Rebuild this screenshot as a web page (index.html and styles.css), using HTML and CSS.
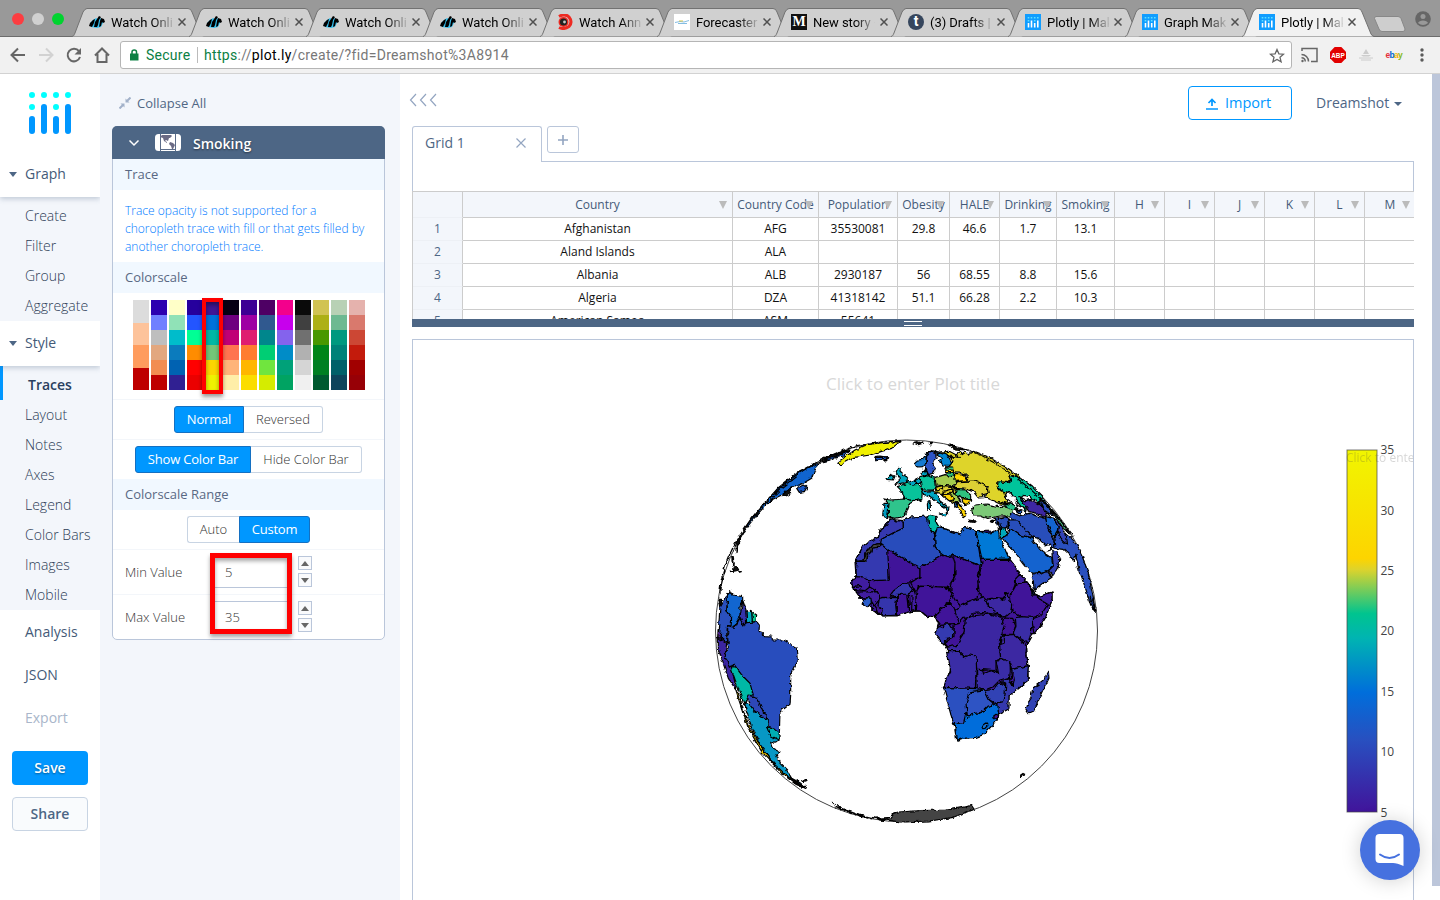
FILE: index.html
```html
<!DOCTYPE html>
<html lang="en">
<head>
<meta charset="utf-8">
<title>Plotly | Make charts</title>
<link rel="stylesheet" href="styles.css">
</head>
<body>
<svg class="defs" width="0" height="0">
  <symbol id="tab" viewBox="0 0 132 29"><path d="M0 28.500C2 28 2 27 3 25L11 4Q13 .5 15 .5H116Q119 .5 120 4L129 26Q130 28 132 28.500"/></symbol>
  <symbol id="fish" viewBox="0 0 16 16"><path fill="#37c0ee" d="M1 9l3-3 3-2 2 1 2-1 4 3-1 2-2 4-4 1-6-1z"/><path fill="#000" d="M0 12l1-3 3-3 2-1-1 4-2 4zM5 13l1-5 2-3 2-3 2 1-2 3-1 5-1 2zM10 13l1-6 1-3 3 1 1 3-2 1-1-1-1 4z"/></symbol>
  <symbol id="plotly" viewBox="0 0 16 16"><path fill="#119dff" d="M0 0h16v16H0z"/><path stroke="#fff" stroke-width="1.600" d="M3.500 9v4.500M6.500 6.500v7M9.700 9v4.500M12.800 6.500v7"/><path stroke="#5fe0ff" stroke-width="1.600" d="M3.500 3v1.500M6.500 3v1.500M9.700 3v1.500M12.800 3v1.500M3.500 6v1.500M9.700 6v1.500"/></symbol>
  <symbol id="x" viewBox="0 0 8 8"><path d="M.5.5l7 7M7.500.5l-7 7"/></symbol>
</svg>

<header class="tabs">
  <div class="lights"><i class="red"></i><i class="grey"></i><i class="green"></i></div>
  <div class="tab"><svg class="shape"><use href="#tab"/></svg><svg class="fav"><use href="#fish"/></svg><span>Watch Online</span><svg class="x"><use href="#x"/></svg></div>
  <div class="tab"><svg class="shape"><use href="#tab"/></svg><svg class="fav"><use href="#fish"/></svg><span>Watch Online</span><svg class="x"><use href="#x"/></svg></div>
  <div class="tab"><svg class="shape"><use href="#tab"/></svg><svg class="fav"><use href="#fish"/></svg><span>Watch Online</span><svg class="x"><use href="#x"/></svg></div>
  <div class="tab"><svg class="shape"><use href="#tab"/></svg><svg class="fav"><use href="#fish"/></svg><span>Watch Online</span><svg class="x"><use href="#x"/></svg></div>
  <div class="tab"><svg class="shape"><use href="#tab"/></svg><svg class="fav" viewBox="0 0 16 16"><path d="M2 2.500Q8-1 12 3Q16 8 12 12.500Q7 16 2 13.500" fill="none" stroke="#ee2a22" stroke-width="3"/><circle cx="6.500" cy="8" r="5" fill="#ee2a22"/><circle cx="6.500" cy="8" r="3.600" fill="#222"/><circle cx="7.500" cy="8" r="1.400" fill="#c8c8c8"/></svg><span>Watch Anna</span><svg class="x"><use href="#x"/></svg></div>
  <div class="tab"><svg class="shape"><use href="#tab"/></svg><svg class="fav" viewBox="0 0 16 16"><path fill="#fff" d="M0 0h16v16H0z"/><path d="M1 8.500L6 7.500 10 8 15 6.500M4 9.500h9" stroke="#84bde2" fill="none"/><path d="M5 7l4 0" stroke="#d7c64b"/></svg><span>Forecaster</span><svg class="x"><use href="#x"/></svg></div>
  <div class="tab"><svg class="shape"><use href="#tab"/></svg><b class="fav medium">M</b><span>New story – M</span><svg class="x"><use href="#x"/></svg></div>
  <div class="tab"><svg class="shape"><use href="#tab"/></svg><b class="fav tumblr">t</b><span>(3) Drafts | T</span><svg class="x"><use href="#x"/></svg></div>
  <div class="tab"><svg class="shape"><use href="#tab"/></svg><svg class="fav"><use href="#plotly"/></svg><span>Plotly | Make</span><svg class="x"><use href="#x"/></svg></div>
  <div class="tab"><svg class="shape"><use href="#tab"/></svg><svg class="fav"><use href="#plotly"/></svg><span>Graph Maker</span><svg class="x"><use href="#x"/></svg></div>
  <div class="tab active"><svg class="shape"><use href="#tab"/></svg><svg class="fav"><use href="#plotly"/></svg><span>Plotly | Make</span><svg class="x"><use href="#x"/></svg></div>
  <svg class="newtab" width="34" height="18" viewBox="0 0 34 18"><path d="M3 1.500H25Q27 1.500 28 3.500L32 14Q32 16.500 30 16.500H9Q7 16.500 6 14L1.500 3.500Q1.500 1.500 3 1.500z" fill="#cecece" stroke="#888"/></svg>
  <svg class="user" width="16" height="16" viewBox="0 0 16 16"><circle cx="8" cy="8" r="7.800" fill="#666"/><circle cx="8" cy="5.500" r="2.500" fill="#999"/><path d="M3 12Q4 9.500 8 9.500T13 12Q8 16 3 12" fill="#999"/></svg>
</header>

<div class="toolbar">
  <svg class="nav" width="120" height="36" viewBox="0 0 120 36" fill="none" stroke="#666" stroke-width="2">
    <path d="M25 18H12M18 11.500L11.500 18 18 24.500"/><path stroke="#d2d2d2" d="M39 18h13M46 11.500L52.500 18 46 24.500"/>
    <path d="M79 14.200A6.300 6.300 0 1 0 80 20"/><path d="M81 11v6.500h-6.500z" fill="#666" stroke="none"/><path d="M95 18.500L102 11.500 109 18.500M97.500 17v8H106.500v-8"/>
  </svg>
  <div class="url">
    <svg width="9" height="12" viewBox="0 0 9 12"><path d="M0 4.500h8.500V11.500H0z" fill="#0b8043"/><path d="M2 5V3Q2 1 4.250 1T6.500 3v2" stroke="#0b8043" stroke-width="1.500" fill="none"/></svg>
    <span class="secure">Secure</span><i></i><span class="addr"><em>https</em>://<b>plot.ly</b>/create/?fid=Dreamshot%3A8914</span>
    <svg class="star" width="16" height="15" viewBox="0 0 16 15"><path d="M8 1.500L9.900 5.800 14.600 6.200 11 9.300 12.100 13.800 8 11.400 3.900 13.800 5 9.300 1.400 6.200 6.100 5.800z" fill="none" stroke="#666" stroke-width="1.300"/></svg>
  </div>
  <svg class="ext" width="148" height="36" viewBox="0 0 148 36">
    <g fill="none" stroke="#666" stroke-width="1.500"><path d="M10 14v-2.500H25V24.500H19M9.500 17.500A7 7 0 0 1 16.500 24.500M9.500 20.700A4 4 0 0 1 13.300 24.500"/></g><circle cx="10.500" cy="24" r="1.200" fill="#666"/>
    <path d="M42.700 10H49.300L54 14.700V21.300L49.300 26H42.700L38 21.300V14.700z" fill="#e20000"/><text x="46" y="21" class="abp" text-anchor="middle" textLength="13.500" lengthAdjust="spacingAndGlyphs">ABP</text>
    <path d="M71 17l3-5 3 5zM69 18h10l-2 1.500h-6z" fill="#ccc"/><path d="M67 21h14M69 23h10" stroke="#ccc"/>
    <text x="93.500" y="21" class="ebay"><tspan fill="#e53238">e</tspan><tspan fill="#0064d2">b</tspan><tspan fill="#f5af02">a</tspan><tspan fill="#86b817">y</tspan></text>
    <g fill="#5a5a5a"><circle cx="130" cy="13" r="1.700"/><circle cx="130" cy="18" r="1.700"/><circle cx="130" cy="23" r="1.700"/></g>
  </svg>
</div>

<div class="app">
  <nav class="side">
    <svg class="logo" width="44" height="44" viewBox="0 0 44 44" stroke-width="6" stroke-linecap="round"><path stroke="#0097ff" d="M4 28v12M16 16v24M28 28v12M40 16v24"/><path stroke="#0ff" d="M4 4h0M16 4h0M28 4h0M40 4h0M4 16h0M28 16h0"/></svg>
    <div class="head graph"><i class="caret"></i>Graph</div>
    <div class="sub first"><a>Create</a><a>Filter</a><a>Group</a><a>Aggregate</a></div>
    <div class="head style"><i class="caret"></i>Style</div>
    <div class="sub"><a class="on">Traces</a><a>Layout</a><a>Notes</a><a>Axes</a><a>Legend</a><a>Color Bars</a><a>Images</a><a>Mobile</a></div>
    <a class="top">Analysis</a><a class="top">JSON</a><a class="top off">Export</a>
    <button class="save">Save</button><button class="share">Share</button>
  </nav>

  <section class="panel">
    <div class="collapse"><svg width="12" height="12" viewBox="0 0 12 12" stroke="#a2b1c9" fill="#a2b1c9"><path d="M.5 11.500L4 8M11.500.5L8 4" stroke-width="2"/><path d="M1.500 6.500H5.500V10.500zM6.500 1.500V5.500H10.500z" stroke="none"/></svg>Collapse All</div>
    <div class="card">
      <div class="title"><svg width="12" height="8" viewBox="0 0 12 8"><path d="M1.500 1.500L6 6 10.500 1.500" fill="none" stroke="#fff" stroke-width="1.500"/></svg>
        <svg class="map" width="26" height="17" viewBox="0 0 26 17"><rect width="26" height="17" rx="3.500" fill="#fff"/><path d="M5.500 0v17M20.500 0v17M6 15.500h14" stroke="#5b6c89" fill="none"/><path d="M7 1h9l1 1-2 2-1 0-1 3-2-1-1 1 2 1 0 1-3-2-1-3-3-1zM15 8l3 1 2 2-2 4-1 0-1-3-2-2z" fill="#6b6b85"/></svg>Smoking</div>
      <h3>Trace</h3>
      <p>Trace opacity is not supported for a<br>choropleth trace with fill or that gets filled by<br>another choropleth trace.</p>
      <h3>Colorscale</h3>
      <div class="scales">
        <div><i style="background:#dcdcdc"></i><i style="background:#fdc39b"></i><i style="background:#ff9c5e"></i><i style="background:#be0000"></i></div>
        <div><i style="background:#2c00b0"></i><i style="background:#7080ff"></i><i style="background:#bebebe"></i><i style="background:#e2a77f"></i><i style="background:#f28d51"></i><i style="background:#be0000"></i></div>
        <div><i style="background:#ffffc8"></i><i style="background:#90e2b7"></i><i style="background:#00bccb"></i><i style="background:#0b7bbd"></i><i style="background:#0062b2"></i><i style="background:#302092"></i></div>
        <div><i style="background:#26009d"></i><i style="background:#2355ff"></i><i style="background:#00ff95"></i><i style="background:#ff8c00"></i><i style="background:#ff0000"></i><i style="background:#eb0000"></i></div>
        <div class="picked"><i style="background:#401796"></i><i style="background:#0072dc"></i><i style="background:#00b8a5"></i><i style="background:#73c678"></i><i style="background:#fcd600"></i><i style="background:#eff300"></i></div>
        <div><i style="background:#050014"></i><i style="background:#6e007f"></i><i style="background:#c00076"></i><i style="background:#ff7450"></i><i style="background:#ffb479"></i><i style="background:#ffeea8"></i></div>
        <div><i style="background:#3d0094"></i><i style="background:#9e00a3"></i><i style="background:#df1e70"></i><i style="background:#ff7d30"></i><i style="background:#ffb600"></i><i style="background:#fbdd00"></i></div>
        <div><i style="background:#4e0064"></i><i style="background:#30598f"></i><i style="background:#00868c"></i><i style="background:#00ce74"></i><i style="background:#70e53e"></i><i style="background:#d5ec00"></i></div>
        <div><i style="background:#f3008c"></i><i style="background:#c700ed"></i><i style="background:#8463ed"></i><i style="background:#008cc7"></i><i style="background:#00a179"></i><i style="background:#00a362"></i></div>
        <div><i style="background:#0a0a0a"></i><i style="background:#404040"></i><i style="background:#707070"></i><i style="background:#b1b1b1"></i><i style="background:#d5d5d5"></i><i style="background:#f0f0f0"></i></div>
        <div><i style="background:#d1c353"></i><i style="background:#adb016"></i><i style="background:#499800"></i><i style="background:#008518"></i><i style="background:#007f22"></i><i style="background:#005a2f"></i></div>
        <div><i style="background:#b8d1b5"></i><i style="background:#6db991"></i><i style="background:#00997f"></i><i style="background:#008278"></i><i style="background:#006069"></i><i style="background:#0d445b"></i></div>
        <div><i style="background:#e5b2ad"></i><i style="background:#d9796d"></i><i style="background:#cc4734"></i><i style="background:#c31b0c"></i><i style="background:#a10000"></i><i style="background:#970006"></i></div>
      </div>
      <div class="row"><b class="l w70">Normal</b><span class="r w79">Reversed</span></div>
      <div class="row last"><b class="l w116">Show Color Bar</b><span class="r w111">Hide Color Bar</span></div>
      <h3>Colorscale Range</h3>
      <div class="row auto"><span class="l w52">Auto</span><b class="r w71">Custom</b></div>
      <div class="field"><label>Min Value</label><div class="in">5</div><div class="spin"><i class="up"></i><i class="down"></i></div></div>
      <div class="field"><label>Max Value</label><div class="in">35</div><div class="spin"><i class="up"></i><i class="down"></i></div></div>
      <div class="mark"></div>
    </div>
  </section>

  <main>
    <div class="bar"><svg width="28" height="14" viewBox="0 0 28 14" fill="none" stroke="#93a5c1" stroke-width="1.200"><path d="M7 1L1.500 7 7 13M17 1l-5.500 6 5.500 6M27 1l-5.500 6 5.500 6"/></svg>
      <button class="import"><svg width="12" height="12" viewBox="0 0 12 12"><path d="M0 11h12M6 8V2M2.500 5L6 1.500 9.500 5" fill="none" stroke="#0097ff" stroke-width="1.700"/></svg>Import</button>
      <span class="account">Dreamshot<i class="caret"></i></span></div>
    <div class="gridtabs"><div class="gtab">Grid 1<svg width="10" height="10" viewBox="0 0 10 10" stroke="#93a5c1" stroke-width="1.200"><path d="M.5.5l9 9M9.500.5l-9 9"/></svg></div><div class="plus"><svg width="10" height="10" viewBox="0 0 10 10"><path d="M0 5h10M5 0v10" stroke="#93a5c1" stroke-width="1.600"/></svg></div></div>
    <div class="formula"></div>
    <div class="sheet">
      <table>
        <colgroup><col class="c50"><col class="c270"><col class="c86"><col class="c79"><col class="c52"><col class="c50"><col class="c57"><col class="c58"><col class="c50"><col class="c50"><col class="c50"><col class="c50"><col class="c50"><col class="c50"></colgroup>
        <tr><th></th><th>Country<i></i></th><th>Country Code<i></i></th><th>Population<i></i></th><th>Obesity<i></i></th><th>HALE<i></i></th><th>Drinking<i></i></th><th>Smoking<i></i></th><th>H<i></i></th><th>I<i></i></th><th>J<i></i></th><th>K<i></i></th><th>L<i></i></th><th>M<i></i></th></tr>
        <tr><td>1</td><td>Afghanistan</td><td>AFG</td><td>35530081</td><td>29.8</td><td>46.6</td><td>1.7</td><td>13.1</td><td></td><td></td><td></td><td></td><td></td><td></td></tr>
        <tr><td>2</td><td>Aland Islands</td><td>ALA</td><td></td><td></td><td></td><td></td><td></td><td></td><td></td><td></td><td></td><td></td><td></td></tr>
        <tr><td>3</td><td>Albania</td><td>ALB</td><td>2930187</td><td>56</td><td>68.55</td><td>8.8</td><td>15.6</td><td></td><td></td><td></td><td></td><td></td><td></td></tr>
        <tr><td>4</td><td>Algeria</td><td>DZA</td><td>41318142</td><td>51.1</td><td>66.28</td><td>2.2</td><td>10.3</td><td></td><td></td><td></td><td></td><td></td><td></td></tr>
        <tr><td>5</td><td>American Samoa</td><td>ASM</td><td>55641</td><td></td><td></td><td></td><td></td><td></td><td></td><td></td><td></td><td></td><td></td></tr>
      </table>
    </div>
    <div class="split"><i></i></div>
    <div class="plot">
      <svg width="1001" height="560" viewBox="413 340 1001 560">
        <defs>
          <linearGradient id="cb" x2="0" y2="1"><stop offset="0" stop-color="#f1f500"/><stop offset=".3" stop-color="#fdd400"/><stop offset=".33" stop-color="#ddd32c"/><stop offset=".452" stop-color="#00c48f"/><stop offset=".52" stop-color="#00b4b2"/><stop offset=".67" stop-color="#006edb"/><stop offset=".8" stop-color="#2850c0"/><stop offset="1" stop-color="#41149b"/></linearGradient>
          <!-- roughens coastlines and borders -->
          <filter id="coast" filterUnits="userSpaceOnUse" x="700" y="430" width="410" height="400" color-interpolation-filters="sRGB"><feTurbulence type="fractalNoise" baseFrequency=".2" numOctaves="2" seed="4" result="n"/><feDisplacementMap in="SourceGraphic" in2="n" scale="4.500" xChannelSelector="R" yChannelSelector="G"/></filter>
        </defs>
        <text class="ptitle" x="913" y="390" text-anchor="middle">Click to enter Plot title</text>
        <circle cx="906.500" cy="631" r="191" fill="#fff" stroke="#444"/>
        <g class="geo" filter="url(#coast)">
          <!-- northern Africa, Europe and western Asia -->
          <g transform="translate(840 430) scale(.33333)">
            <path fill="#3f1599" d="M150 268L190 272 215 262 265 258 288 262 292 293 320 298 360 312 372 295 408 305 475 303 468 318 508 388 530 415 540 433 565 460 583 490 590 500 613 495 636 486 636 510 615 565 600 590 578 613 560 645 563 705 565 750 507 800 505 835 475 852 465 870 430 905 350 930 342 880 333 850 328 815 312 772 332 715 325 655 288 615 295 582 285 558 260 560 242 543 200 545 170 558 123 558 92 532 60 502 35 458 48 440 45 395 62 362 85 335 115 322 120 300z"/>
            <path fill="#3538b0" d="M150 268L158 266 168 273 190 272 190 295 158 310 125 328 122 340 97 345 75 370 68 392 47 394 62 362 72 345 85 335 115 322 120 300 140 285z"/>
            <path fill="#3439b0" d="M122 342L146 360 148 450 85 452 80 448 65 440 50 445 48 420 51 405 46 394 80 394 82 376 93 366 95 354 122 352z"/>
            <path fill="#444" d="M122 341L97 345 92 350 78 372 68 393 80 393 82 376 92 366 95 354 122 351z"/>
            <path fill="#401499" d="M143 361L240 412 240 440 225 452 200 458 188 462 172 478 155 490 145 503 120 503 112 485 88 470 85 453 148 450z"/>
            <path fill="#284cbb" d="M190 271L215 261 265 258 266 280 278 305 284 309 285 350 310 376 240 414 146 361 122 342 125 328 158 310 190 295z"/>
            <path fill="#00bba6" d="M263 262L272 256 288 260 286 270 290 280 297 290 292 300 285 312 278 306 266 284z"/>
            <path fill="#1a60cb" d="M292 293L320 298 332 307 360 313 364 302 372 293 395 298 408 305 425 408 338 375 325 380 310 376 296 364 286 350 284 318z"/>
            <path fill="#0079d6" d="M408 305L422 305 440 310 466 306 475 302 478 320 485 335 508 388 426 388z"/>
            <path fill="#401499" d="M310 376L325 380 338 377 345 400 343 442 330 462 335 472 280 470 240 468 228 486 212 458 240 440 240 412zM338 375L420 408 413 455 417 483 410 505 380 518 362 528 345 510 332 485 336 460 345 440 345 400zM426 388L510 388 530 415 538 435 528 445 525 465 515 490 505 512 498 485 492 505 470 503 440 508 426 500 413 482 415 445 425 408zM234 470L280 468 325 475 340 490 325 520 300 538 285 560 260 558 242 543 226 542 228 500zM530 462L560 455 583 490 588 500 625 522 600 560 575 568 545 562 520 545 515 520 510 495 520 480zM172 493L203 491 209 545 172 557z"/>
            <path fill="#401da0" d="M600 558L625 522 590 502 636 486 636 510 615 565 582 612 575 568zM540 433L528 445 530 462 560 455 585 492 578 478 565 460zM35 458L48 440 70 441 85 452 88 472 75 482 40 478zM48 486L112 485 122 505 113 515 103 530 92 515 90 505 72 512 58 500zM37 470l20-4 10 5-30 2zM60 502L90 505 95 515 122 557 92 532zM205 491L222 480 228 500 226 542 215 543 216 495M209 545L205 491"/>
            <path fill="#3535ac" d="M150 498L160 483 188 462 204 455 210 470 222 480 205 492 173 493 170 500zM118 505L130 502 170 503 167 525 170 555 123 558 127 540 114 530z"/><path fill="#2a5cca" d="M70 515L80 503 93 505 94 518 82 533 70 525z"/>
            <path fill="#3c28a2" d="M433 503L450 510 470 503 492 508 500 485 506 510 518 524 515 545 496 562 470 552 448 532 438 515z"/><path fill="#3c23a0" d="M341 545L360 528 410 508 432 500 445 530 482 555 430 548 400 550 378 570 355 590 345 565z"/>
            <!-- Russia and central Asia -->
            <path fill="#ded42a" d="M303 66L325 70 340 82 356 68 366 74 378 66 390 73 400 64 450 84 500 112 545 146 520 140 506 135 512 150 500 158 475 155 472 170 480 180 510 190 495 190 500 214 520 230 480 222 443 205 437 200 445 170 425 160 405 160 378 152 384 142 368 128 340 125 325 108 340 95 330 80z"/>
            <path fill="#ded42a" d="M330 48L365 60 378 58 372 63 345 60zM303 66l25-2 20 10 10 8-30-4z"/>
            <path fill="#00c49b" d="M506 135L520 140 545 146 578 172 605 198 622 225 600 208 595 216 570 200 548 196 540 203 555 225 560 245 545 232 524 205 510 190 480 180 472 170 475 155 500 158 512 150z"/>
            <path fill="#fff" d="M497 190L512 188 524 205 533 215 530 225 545 232 560 250 553 257 530 243 520 228 512 215 500 205z"/>
            <path fill="#51c78a" d="M622 222L650 255 690 312 670 295 640 250 628 240z"/>
            <path fill="#3d27a2" d="M540 202L558 212 572 208 595 222 620 245 617 262 590 250 567 245 553 225z"/><path fill="#284eba" d="M595 212L618 222 640 255 625 250 605 235zM497 240L512 246 540 258 567 250 617 265 625 290 640 325 648 355 600 345 575 318 550 300 520 270z"/>
            <path fill="#1464ce" d="M617 260L640 265 655 290 652 305 643 320 633 305 620 280z"/><path fill="#3343b5" d="M640 263L655 275 675 310 688 330 678 345 660 330 653 305 655 290z"/>
            <path fill="#2a50bf" d="M675 310L705 335 725 375 745 430 760 505 765 545 752 525 735 470 718 425 708 375 700 395 690 375 672 358 645 355 642 325 655 305 665 330 680 345z"/>
            <path fill="#284eba" d="M465 265L500 260 510 270 505 290 480 300 473 285zM503 270L530 270 575 320 565 322 535 313 505 295z"/>
            <path fill="#1463cf" d="M487 325L500 318 510 295 535 313 575 325 590 345 600 360 635 385 640 410 620 425 575 430 550 400 520 360 495 335z"/><path fill="#2c50c1" d="M575 432L605 430 620 422 636 442 605 462 583 480 580 456z"/><path fill="#3340b4" d="M635 362L650 366 659 390 655 415 638 437 624 424 640 408z"/>
            <path fill="#00a9ba" d="M483 293L500 295 500 315 487 325 480 310z"/><path fill="#fff" d="M575 320L595 325 618 348 632 342 632 360 612 367 597 350 585 340z"/>
            <path fill="#7cc977" d="M395 235L408 225 440 222 475 230 500 228 518 240 510 258 480 258 460 262 440 265 422 258 400 258z"/><path fill="#23c188" d="M475 215L500 220 520 225 537 240 510 237 500 225z"/>
            <!-- Europe -->
            <path fill="#167bd1" d="M224 100L235 90 248 88 258 72 275 62 305 68 300 72 285 68 268 68 258 80 257 102 248 113 232 114z"/><path fill="#2d55c6" d="M260 75L275 66 288 72 288 82 278 100 285 118 280 130 263 134 256 120 259 97z"/><path fill="#0085d2" d="M290 75L303 66 320 72 336 98 330 106 305 105 298 92 305 84z"/>
            <path fill="#00a6bd" d="M173 112L184 114 183 126 196 138 205 150 203 157 165 163 178 152 177 142 165 126zM140 148L152 133 165 138 160 150z"/><path fill="#08c39b" d="M172 170L188 165 205 158 230 158 248 180 245 207 230 212 195 210 187 185zM240 140L262 134 282 142 286 170 280 180 245 180z"/>
            <path fill="#2fc48c" d="M133 207L150 210 195 207 225 213 205 225 198 245 190 260 165 265 145 260 145 220z"/><path fill="#009cc0" d="M132 220L147 220 143 262 128 260z"/><path fill="#00a5c3" d="M245 185L280 182 290 195 300 213 327 233 324 250 318 233 290 215 270 200 247 192zM298 252l28-3-10 12zM262 222l9-4v20h-8zM264 213l6-1v8h-6zM226 148l12-6 3 15-10 6zM246 130l10-10 4 12-6 8zM200 157l25-6 8 12-17 2z"/>
            <path fill="#a4cc4f" d="M286 143L315 134 345 140 348 163 330 168 288 165zM330 188l18 5 15 23-18-3-18-15z"/><path fill="#dcd035" d="M286 170L310 167 345 170 345 188 315 192 288 188zM348 155L405 153 440 168 445 190 425 195 435 203 415 204 400 185 380 178 347 175z"/><path fill="#ffd500" d="M343 130L370 132 384 152 346 154zM315 120h25v8h-24zM305 194L330 192 342 210 328 213zM350 215L365 230 380 257 372 263 360 243 353 225zM365 205l30 4-8 12-16 3z"/><path fill="#2fc27f" d="M318 110l20 1v9h-20zM320 128l22 2v9h-18zM348 178L375 180 392 195 392 207 365 205 345 195z"/><path fill="#1769cc" d="M342 215l8 3 5 16-10-4z"/>
            <path fill="#e2ce22" d="M286 172l25-5 0 8-20 7zM309 184l31-8-4 13-25 3zM325 213l16-4 3 10z"/><path fill="#111" d="M385 270l22 3-5 4-16-2zM448 274l13-4-3 8z"/>
            <path fill="#1a4fc0" d="M102 80L120 78 143 82 140 89 110 92z"/><path fill="#111" d="M218 38l14-3 15 5-13 4zM268 41l10-1-5 5zM325 45l20 2 30 13-20-1z"/>
            <path fill="#1b57bd" d="M577 482l7 2-2 12-6-5zM525 236l20 8-6 7zM590 215l15 7 5 12zM615 245l9 3 4 12z"/><path d="M475 262v42M478 275l7 25M573 485l8 3M750 500l12 40 3-10-8-22M380 58Q560 130 700 320"/>
          </g>
          <!-- southern Africa -->
          <g transform="translate(840 600) scale(.33333)">
            <path fill="#401499" d="M285 50L300 28 330 10 342 23 348 40 358 70 298 73zM342 75L358 70 368 55 382 54 372 100 350 140 322 143 312 130 330 118 342 110zM490 54L518 55 527 78 518 102 490 104 484 80z"/><path fill="#343ab0" d="M294 78L310 83 312 72 330 73 335 82 342 85 340 112 320 115 311 135 287 102z"/><path fill="#3b26a1" d="M376 56L395 48 450 42 484 52 492 80 486 105 478 122 482 175 468 180 468 210 475 222 462 212 410 207 408 168 390 165 370 172 360 152 325 152 320 142 350 136 372 100z"/>
            <path fill="#3a2da6" d="M526 53L545 50 578 52 574 95 565 130 520 103 528 75zM322 152L360 152 370 172 390 165 408 168 412 266 345 263 312 262 318 238 332 213 326 180zM408 210L425 208 427 220 463 211 476 223 468 180 500 178 513 190 515 230 480 240 460 260 435 270 406 266z"/><path fill="#3c28a2" d="M486 108L518 103 560 135 557 170 565 200 518 207 512 187 482 175 478 125z"/><path fill="#3538ad" d="M518 208L565 197 562 240 548 255 507 290 507 325 475 342 473 310 490 295 497 252 482 246 505 235 520 255 523 240z"/>
            <path fill="#3142b5" d="M434 272L460 268 475 249 497 254 495 285 487 305 465 310 445 298z"/><path fill="#2b50c0" d="M310 262L345 264 410 266 435 270 395 275 392 303 380 310 380 362 368 371 340 367 333 345z"/><path fill="#2e54c4" d="M392 275L433 270 448 300 460 310 430 333 410 343 382 352 378 310z"/><path fill="#006ddb" d="M342 367L370 370 379 335 383 352 402 340 425 338 445 318 473 310 476 350 458 375 430 404 410 412 370 415 352 421 348 392z"/>
            <path fill="#1470d0" d="M425 378l12-9 7 6-9 10-7 1z"/><path fill="#451593" d="M461 348l7-5 7 3 0 9-10 2z"/><path fill="#3c27a2" d="M510 188l6 25-3 35 8 8-14-10 4-32zM484 107l9 2 0 20-13 5z"/><path fill="#3142b3" d="M625 214L627 235 610 270 580 335 567 341 558 328 563 310 573 295 578 265 595 252 612 238z"/>
            <path fill="#333" d="M542 530l12-8-3 8-6 3z"/><path fill="#444" d="M112 655L150 652 160 640 175 636 240 632 320 630 350 625 395 617 402 627 340 652 270 663 180 666z"/><path fill="#000" d="M-15 620L30 632 75 648 110 655 150 662 60 648z"/>
          </g>
          <!-- the Americas -->
          <g transform="translate(700 430) scale(.33333)">
            <path fill="#f0f000" d="M412 98L430 84 465 60 500 44 550 36 600 35 575 55 535 67 510 75 460 83 432 98 420 104z"/><path fill="#1064cf" d="M120 325L145 280 185 230 235 173 290 130 360 97 347 112 335 145 310 160 280 172 245 195 210 212 170 255 135 300z"/><path fill="#1857c5" d="M290 175l20-10 10 8-7 12-15 2zM370 95l20-15 40-17 20-3-20 18-25 6-10 5zM523 82l25 0 15-2-5 8-28 3z"/><path fill="#111" d="M245 200l15-20 15-7-5 10 5 6-15 8zM365 93l25-14 55-20-30 18zM108 368l0-26 12-20 2 6-12 30zM95 380l3 25 5-2-4-23zM88 425l12-4 4-14 8 5 4 8-10 3zM57 508l8 0-2 18-6-4zM118 423l6 2-5 2z"/><path d="M60 490C60 440 75 390 118 320 200 180 330 90 470 47L600 32M63 480C65 430 85 370 122 312M200 210L290 140M195 225L240 185"/>
            <path fill="#2a50be" d="M60 530L80 495 92 483 90 500 82 515 80 542 100 560 102 593 83 590 80 612 84 640 65 625 55 602z"/><path fill="#1266d0" d="M82 495L92 485 98 495 128 500 128 512 120 530 120 562 103 590 93 595 95 560 82 545z"/><path fill="#3534ac" d="M128 510L138 540 140 580 128 588 120 562z"/><path fill="#00a7c2" d="M138 543L155 545 158 578 140 578z"/><path fill="#0bc690" d="M156 545L170 555 168 575 157 578z"/>
            <path fill="#284dbd" d="M83 590L103 595 120 564 128 588 140 578 170 575 178 585 177 603 190 608 190 617 216 618 217 630 245 630 267 638 280 650 292 657 295 690 272 737 272 795 270 823 240 845 238 910 205 890 203 865 185 835 165 803 147 796 150 760 125 735 102 703 85 715 75 680 85 650 83 618z"/><path fill="#3b25a1" d="M55 602L65 627 80 640 75 680 88 712 98 705 103 748 108 780 85 745 55 658z"/><path fill="#00b8a6" d="M101 703L125 735 150 760 160 795 144 797 133 825 105 748 95 720z"/><path fill="#f9d400" d="M105 775L115 790 130 840 150 895 180 945 220 1000 265 1040 320 1075 295 1068 245 1030 185 965 145 895z"/><path fill="#0798c5" d="M133 820L150 825 197 867 205 865 203 893 238 930 215 940 220 955 240 965 228 973 240 1000 260 1020 275 1045 300 1058 320 1075 270 1045 220 1000 185 950 155 895z"/><path fill="#2e47b8" d="M144 795L165 800 180 823 190 850 202 852 198 867 160 840 144 815z"/><path fill="#00adb3" d="M204 890L220 895 238 910 235 930 212 918z"/><path fill="#000" d="M308 1052l10-3 3 5-8 3zM400 1116l8 8 30 18 55 15-5 4-70-28zM530 1164l25 2 0 5-22-2zM270 1048l50 27-30-10z"/><path fill="#4c228e" d="M55 597l10 12-3 20-9-6z"/>
          </g>
        </g>
        <rect x="1347" y="450" width="30" height="362" fill="url(#cb)" stroke="#444" stroke-opacity=".7"/>
        <g class="ticks"><text x="1380.500" y="454">35</text><text x="1380.500" y="515">30</text><text x="1380.500" y="575">25</text><text x="1380.500" y="635">20</text><text x="1380.500" y="696">15</text><text x="1380.500" y="756">10</text><text x="1380.500" y="817">5</text></g>
        <text class="cbtitle" x="1346" y="462">Click to enter Colorscale title</text>
      </svg>
    </div>
  </main>
  <div class="scroll"></div>
</div>
<div class="chat"><svg width="30" height="34" viewBox="0 0 30 34"><path d="M4.500 1H24.500Q28.500 1 28.500 5V33Q22 30 18 30H4.500Q.5 30 .5 26V5Q.5 1 4.500 1z" fill="#fff"/><path d="M5 21.500Q14.500 28.500 24 21.500" fill="none" stroke="#4671df" stroke-width="2" stroke-linecap="round"/></svg></div>
</body>
</html>
```
FILE: styles.css
```css
*, *::before, *::after { box-sizing: border-box; }
body { margin: 0; width: 1440px; height: 900px; overflow: hidden; font-family: "Open Sans", sans-serif; background: #fff; color: #444; }
svg { display: block; flex: none; }
button { font-family: inherit; }
.defs { position: absolute; }

.tabs { height: 37px; display: flex; align-items: flex-end; background: #999; border-bottom: 1px solid #6c6c6c; font-family: Roboto, sans-serif; }
.lights { width: 72px; height: 36px; display: flex; gap: 8px; padding: 13px 0 0 12px; }
.lights i { width: 12px; height: 12px; border-radius: 50%; }
.red { background: #fc3d41; } .grey { background: #d0d0d0; } .green { background: #00d32f; }
.tab { position: relative; width: 132px; height: 28px; margin-right: -15px; display: flex; align-items: center; flex: none; padding-left: 17px; }
.shape { position: absolute; left: 0; top: 0; width: 132px; height: 29px; fill: #d0d0d0; stroke: #727272; }
.active { z-index: 2; }
.active .shape { fill: #f1f1f1; }
.tab .fav { position: relative; width: 16px; height: 16px; flex: none; }
.tab span { position: relative; margin-left: 6px; width: 62px; overflow: hidden; white-space: nowrap; font-size: 13px; letter-spacing: -.05px; color: #000; -webkit-mask-image: linear-gradient(90deg, #000 68%, transparent 104%); mask-image: linear-gradient(90deg, #000 68%, transparent 104%); }
.tab .x { position: relative; width: 8px; height: 8px; margin-left: 5px; stroke: #505050; stroke-width: 1.5; }
.medium, .tumblr { color: #fff; text-align: center; line-height: 16px; font-size: 14px; }
.medium { background: #111; font-family: "Liberation Serif", serif; }
.tumblr { background: #36465d; border-radius: 50%; line-height: 14px; }
.newtab { margin: 0 0 3px 14px; }
.user { margin: 0 0 9px 8px; }

.toolbar { height: 37px; background: #f1f1f1; border-bottom: 1px solid #d2d2d2; display: flex; font-family: Roboto, sans-serif; }
.url { width: 1172px; height: 28px; margin-top: 4px; border: 1px solid #b5b5b5; border-radius: 3px; background: #fff; display: flex; align-items: center; padding-left: 9px; font-size: 14px; }
.secure { color: #0b8043; margin-left: 7px; letter-spacing: .25px; width: 46px; }
.url i { width: 1px; height: 16px; background: #bbb; margin: 0 6px 0 5px; }
.addr { color: #777; letter-spacing: .31px; }
.addr em { font-style: normal; color: #0b8043; } .addr b { font-weight: 400; color: #000; }
.star { margin-left: auto; margin-right: 6px; }
.abp { font: bold 8px "Liberation Sans", sans-serif; fill: #fff; }
.ebay { font: bold 8.5px "Liberation Sans", sans-serif; letter-spacing: -.7px; }

.app { height: 826px; display: flex; }
.side { width: 100px; display: flex; flex-direction: column; background: #fff; color: #445a78; font-size: 14px; }
.logo { margin: 17px 0 0 28px; }
.caret { display: inline-block; border: 4px solid transparent; border-top: 5px solid #4d6685; border-bottom: 0; }
.head { position: relative; display: flex; align-items: center; padding: 0 0 2px 9px; box-shadow: 0 2px 5px rgba(80,103,132,.3); background: #fff; clip-path: inset(0 0 -8px 0); }
.head .caret { margin: 2px 8px 0 0; }
.graph { height: 45px; margin-top: 17px; }
.style { height: 45px; }
.sub { background: #f3f6fb; display: flex; flex-direction: column; font-weight: 300; color: #2c3b55; }
.first { padding-top: 4px; }
.sub a { height: 30px; line-height: 30px; padding-left: 25px; }
.sub .on { height: 34px; line-height: 38px; border-left: 3px solid #0097ff; font-weight: 600; color: #2a3f5f; }
.top { height: 43px; line-height: 44px; padding-left: 25px; }
.off { color: #a9b6ca; }
.save, .share { width: 76px; height: 34px; margin: 12px 0 0 12px; border-radius: 4px; font-size: 14px; font-weight: 600; padding: 0 0 2px; }
.save { background: #0097ff; color: #fff; border: 0; text-shadow: 0 1px 2px rgba(0,0,0,.4); }
.share { background: #f9fbfd; color: #4d6685; border: 1px solid #c8d4e3; }

.panel { width: 300px; background: #f3f6fb; padding: 19px 15px 0 12px; }
.collapse { display: flex; align-items: center; height: 20px; font-size: 13px; color: #506784; padding-left: 7px; gap: 6px; }
.card { position: relative; margin-top: 13px; height: 514px; background: #fff; border: 1px solid #bac6da; border-radius: 5px; }
.title { margin: -1px -1px 0; height: 33px; background: #4d6685; border-radius: 5px 5px 0 0; color: #fff; display: flex; align-items: center; padding: 2px 0 0 16px; font-size: 14px; font-weight: 600; text-shadow: 0 1px 2px rgba(0,0,0,.5); }
.title > svg:first-child { margin-top: -2px; }
.map { margin: -2px 12px 0 15px; }
h3 { margin: 0; height: 31px; line-height: 31px; padding-left: 12px; font-size: 13px; font-weight: 400; color: #596883; background: #f1f8ff; }
.card p { margin: 0; height: 72px; padding: 12px 0 0 12px; font-size: 12px; line-height: 18px; color: #007aff; white-space: nowrap; font-weight: 300; }
.scales { height: 106px; padding: 7px 0 0 20px; display: flex; gap: 2px; }
.scales > div { width: 16px; height: 90px; display: flex; flex-direction: column; }
.scales i { flex: 1; }
.picked { position: relative; }
.picked::after { content: ""; position: absolute; left: -3px; top: -2px; width: 21px; height: 96px; border: 4px solid #f00; box-shadow: inset 0 3px 4px rgba(0,0,0,.4), 0 3px 4px rgba(0,0,0,.4); }
.row { height: 40px; padding-top: 6px; border-top: 1px solid #f3f6fa; display: flex; justify-content: center; font-size: 13px; line-height: 25px; text-align: center; }
.auto { border-top: 0; height: 39px; }
.row b { background: #0097ff; border: 1px solid #1470c2; color: #fff; font-weight: 400; height: 27px; letter-spacing: -.2px; }
.row span { border: 1px solid #c8d4e3; color: #333; font-weight: 300; height: 27px; }
.l { border-radius: 3px 0 0 3px; } .r { border-radius: 0 3px 3px 0; }
.row span.r { border-left: 0; } .row span.l { border-right: 0; }
.w70 { width: 70px; } .w79 { width: 79px; } .w116 { width: 116px; } .w111 { width: 111px; } .w52 { width: 52px; } .w71 { width: 71px; }
.field { height: 45px; border-top: 1px solid #f3f6fa; display: flex; font-size: 13px; padding: 6px 0 0 12px; color: #333; font-weight: 300; }
.field label { width: 88px; line-height: 32px; }
.in { width: 76px; height: 32px; line-height: 30px; border: 1px solid #bac6da; padding-left: 11px; }
.spin { margin-left: 9px; display: flex; flex-direction: column; gap: 3px; }
.spin i { width: 14px; height: 14px; border: 1px solid #bac6da; background: #f9fafc; }
.spin i::before { content: ""; display: block; margin: 4px 0 0 2px; width: 0; border: 4px solid transparent; }
.spin .up::before { border-top: 0; border-bottom: 5px solid #666; }
.spin .down::before { border-bottom: 0; border-top: 5px solid #666; }
.mark { position: absolute; left: 97px; top: 426px; width: 82px; height: 81px; border: 5px solid #f00; box-shadow: inset 0 3px 4px rgba(0,0,0,.35), 0 3px 4px rgba(0,0,0,.35); }

main { width: 1032px; padding: 12px 0 0 12px; }
.bar { display: flex; height: 40px; width: 1002px; }
.bar > svg { margin: 7px 0 0 -3px; }
.import { margin-left: 751px; width: 104px; height: 34px; border: 1px solid #0097ff; border-radius: 4px; background: #fff; color: #0097ff; font-size: 14.500px; display: flex; align-items: center; justify-content: center; gap: 7px; padding: 0 3px 1px 0; }
.import svg { margin-top: 2px; }
.account { margin-left: 24px; line-height: 33px; font-size: 14px; color: #4d6685; white-space: nowrap; }
.account .caret { margin: 0 0 2px 5px; border-top-width: 4px; }
.gridtabs { display: flex; height: 35px; gap: 5px; position: relative; }
.gtab { width: 130px; height: 36px; border: 1px solid #bac6da; border-bottom: 0; border-radius: 3px 3px 0 0; background: #fff; padding: 0 15px 4px 12px; display: flex; align-items: center; justify-content: space-between; font-size: 14px; color: #506784; z-index: 1; }
.plus { width: 32px; height: 27px; border: 1px solid #bac6da; border-radius: 3px; display: flex; align-items: center; justify-content: center; }
.formula { width: 1002px; height: 30px; border: 1px solid #bac6da; border-bottom: 0; }
.sheet { width: 1002px; height: 128px; overflow: hidden; border-left: 1px solid #ccc; }
table { width: 1002px; table-layout: fixed; border-collapse: separate; border-spacing: 0; font-size: 12px; }
th, td { height: 23px; padding: 0; border-top: 1px solid #ccc; border-right: 1px solid #ccc; text-align: center; font-weight: 400; color: #111; line-height: 20px; white-space: nowrap; }
th { position: relative; height: 26px; background: #f3f6fb; color: #445a78; }
th i { position: absolute; right: 5px; top: 9px; border: 4px solid transparent; border-top: 8px solid #bbb; border-bottom: 0; }
td:first-child { background: #f3f6fb; color: #4d6685; border-top-color: #edf0f5; }
th:last-child, td:last-child { border-right: 0; }
.c50 { width: 50px; } .c270 { width: 270px; } .c86 { width: 86px; } .c79 { width: 79px; } .c52 { width: 52px; } .c57 { width: 57px; } .c58 { width: 58px; }
.split { width: 1002px; height: 8px; background: #4d6685; display: flex; justify-content: center; align-items: center; }
.split i { width: 18px; height: 5px; border-top: 1px solid #fff; border-bottom: 1px solid #fff; }
.plot { width: 1002px; height: 561px; margin-top: 12px; border: 1px solid #bac6da; border-bottom: 0; overflow: hidden; }
.plot text { font-family: "Open Sans", sans-serif; }
.ptitle { font-size: 17px; fill: #d8d8d8; }
.cbtitle { font-size: 12px; fill: #444; opacity: .22; }
.ticks { font-size: 12px; fill: #444; }
.geo path { stroke: #000; stroke-width: 3.500px; stroke-linejoin: round; }
.geo path:not([fill]) { fill: none; }
.scroll { width: 8px; height: 812px; background: #bcc6da; }
.chat { position: absolute; left: 1360px; top: 820px; width: 60px; height: 60px; border-radius: 50%; background: #4671df; box-shadow: 0 1px 20px rgba(0,0,0,.18); display: flex; align-items: center; justify-content: center; }
```
